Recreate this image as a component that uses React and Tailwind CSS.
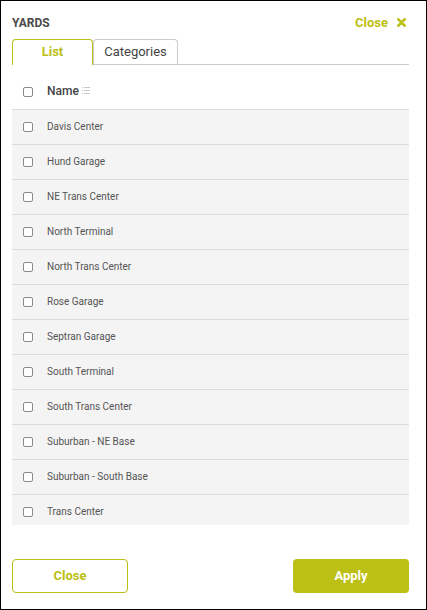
import React from "react";

const yards = [
  "Davis Center",
  "Hund Garage",
  "NE Trans Center",
  "North Terminal",
  "North Trans Center",
  "Rose Garage",
  "Septran Garage",
  "South Terminal",
  "South Trans Center",
  "Suburban - NE Base",
  "Suburban - South Base",
  "Trans Center",
];

function Box() {
  return <span className="block w-[10px] h-[10px] border border-[#8a8a8a] rounded-[2px] bg-white shrink-0" />;
}

export default function App() {
  return (
    <div className="w-[427px] h-[610px] border border-black bg-white flex flex-col font-['Roboto',sans-serif] text-[#444]">
      <div className="ml-[11px] mr-[20px] pt-[12px] flex items-center justify-between">
        <span className="text-[12px] font-bold text-[#4a4a4a]">YARDS</span>
        <button className="flex items-center gap-[9px] text-[#bcbf14] text-[13px] font-bold">
          Close
          <svg width="9" height="9" viewBox="0 0 10 10">
            <path d="M1.5 1.5 L8.5 8.5 M8.5 1.5 L1.5 8.5" stroke="#bcbf14" strokeWidth="3" strokeLinecap="round" />
          </svg>
        </button>
      </div>

      <div className="ml-[11px] mr-[17px] mt-[6px] flex border-b border-[#ccc] h-[26px]">
        <div className="w-[81px] h-[26px] border border-b-0 border-[#bcbf14] rounded-t-[4px] flex items-center justify-center text-[#bcbf14] text-[13px] font-bold bg-white">
          List
        </div>
        <div className="w-[85px] h-[25px] border border-b-0 border-[#ccc] rounded-t-[4px] flex items-center justify-center text-[13px] text-[#444]">
          Categories
        </div>
      </div>

      <div className="ml-[11px] mr-[17px] h-[45px] border-b border-[#ddd] flex items-center pl-[11px] gap-[14px] pt-[10px]">
        <Box />
        <span className="text-[12px] font-medium text-[#444] flex items-center gap-[3px] -mt-[2px]">
          Name
          <svg width="8" height="7" viewBox="0 0 8 7">
            <g fill="#c8c8c8">
              <rect x="0" y="0" width="1" height="1" />
              <rect x="2" y="0" width="6" height="1" />
              <rect x="0" y="3" width="1" height="1" />
              <rect x="2" y="3" width="6" height="1" />
              <rect x="0" y="6" width="1" height="1" />
              <rect x="2" y="6" width="6" height="1" />
            </g>
          </svg>
        </span>
      </div>

      <div className="ml-[11px] mr-[17px] h-[415px] overflow-hidden bg-[#f4f4f4]">
        {yards.map((y) => (
          <div key={y} className="h-[35px] border-b border-[#ddd] flex items-center pl-[11px] gap-[14px]">
            <Box />
            <span className="text-[10px] text-[#555]">{y}</span>
          </div>
        ))}
      </div>

      <div className="ml-[11px] mr-[17px] mt-[34px] flex justify-between">
        <button className="w-[116px] h-[34px] border border-[#bcbf14] rounded-[4px] text-[#bcbf14] text-[13px] font-bold bg-white">
          Close
        </button>
        <button className="w-[116px] h-[34px] rounded-[4px] bg-[#bcbf14] text-white text-[13px] font-bold">
          Apply
        </button>
      </div>
    </div>
  );
}
